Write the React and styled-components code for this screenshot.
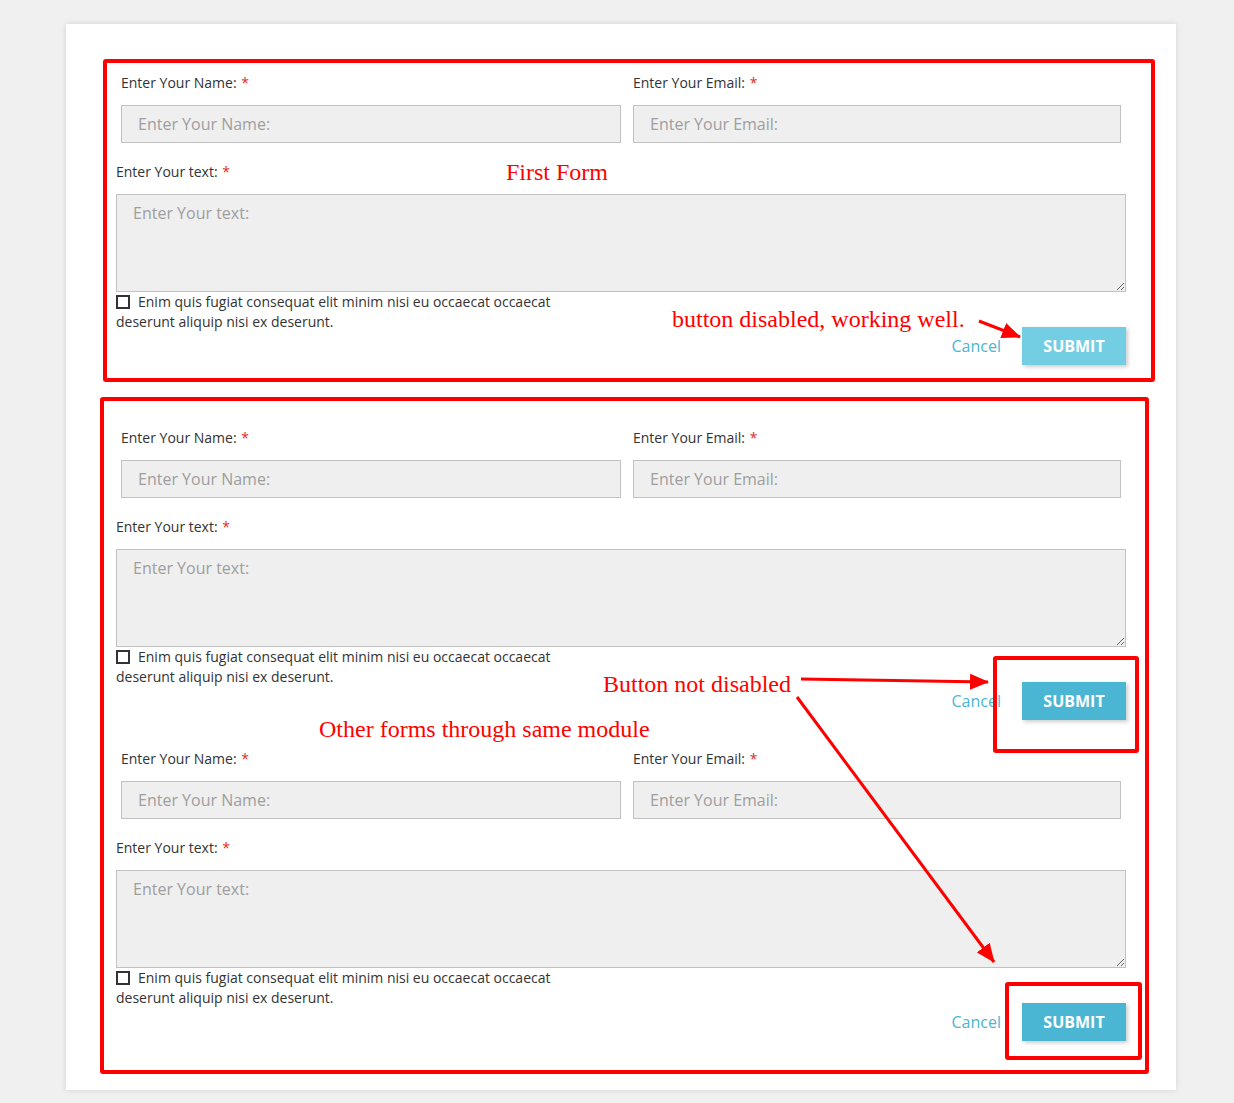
import React from "react";
import styled, { createGlobalStyle } from "styled-components";

const GlobalStyle = createGlobalStyle`
  html, body { margin: 0; padding: 0; }
  body {
    background: #f0f0f0;
    font-family: "Open Sans", "Noto Sans", sans-serif;
    color: #333;
  }
  * { box-sizing: border-box; }
`;

const Page = styled.div`
  position: relative;
  width: 1234px;
  height: 1103px;
  padding-top: 24px;
  overflow: hidden;
`;

const Card = styled.div`
  width: 1110px;
  margin-left: 66px;
  background: #fff;
  padding: 49px 50px 49px 50px;
  box-shadow: 0 0 6px rgba(0, 0, 0, 0.12);
`;

const FormBlock = styled.form`
  width: 1010px;
  margin-bottom: ${(p) => p.$after || 0}px;
`;

const TopRow = styled.div`
  display: grid;
  grid-template-columns: 505px 505px;
`;

const Col = styled.div`
  padding: ${(p) => (p.$right ? "0 5px 0 12px" : "0 0 0 5px")};
`;

const Label = styled.label`
  display: block;
  font-size: 14px;
  line-height: 20px;
  color: #333;
  margin-top: ${(p) => p.$top || 0}px;
  margin-bottom: 12px;
`;

const Star = styled.span`
  color: #e02b27;
  margin-left: 1px;
`;

const Input = styled.input`
  display: block;
  width: 100%;
  height: 38px;
  margin: 0;
  padding: 0 16px;
  border: 1px solid #c2c2c2;
  background: #efefef;
  font-family: "Open Sans", "Noto Sans", sans-serif;
  font-size: 16px;
  color: #333;
  outline: none;
  &::placeholder { color: #9e9e9e; }
`;

const TextArea = styled.textarea`
  display: block;
  width: 100%;
  height: 98px;
  margin: 0;
  padding: 7px 16px;
  border: 1px solid #c2c2c2;
  background: #efefef;
  font-family: "Open Sans", "Noto Sans", sans-serif;
  font-size: 16px;
  line-height: 22px;
  color: #333;
  resize: vertical;
  outline: none;
  &::placeholder { color: #9e9e9e; }
`;

const BottomRow = styled.div`
  display: flex;
  justify-content: space-between;
  align-items: flex-start;
`;

const CheckLabel = styled.label`
  width: 455px;
  font-size: 14px;
  line-height: 20px;
  color: #333;
`;

const CheckBox = styled.span`
  display: inline-block;
  width: 14px;
  height: 14px;
  border: 2px solid #333;
  margin-right: 8px;
  vertical-align: -2px;
`;

const Actions = styled.div`
  display: flex;
  align-items: center;
  gap: 21px;
  padding-top: 35px;
`;

const Cancel = styled.a`
  font-size: 16px;
  color: #4ab6d3;
  text-decoration: none;
`;

const Submit = styled.button`
  width: 104px;
  height: 38px;
  border: none;
  padding: 0;
  background: ${(p) => (p.disabled ? "#73cee3" : "#4ab6d3")};
  color: #fff;
  font-family: "Open Sans", "Noto Sans", sans-serif;
  font-weight: 700;
  font-size: 16px;
  letter-spacing: 0;
  box-shadow: 2px 2px 4px rgba(0, 0, 0, 0.2);
  cursor: pointer;
`;

const Overlay = styled.div`
  position: absolute;
  inset: 0;
  pointer-events: none;
`;

const Marks = styled.svg`
  position: absolute;
  left: 0;
  top: 0;
`;

const Note = styled.span`
  position: absolute;
  font-family: "Liberation Serif", "Times New Roman", serif;
  font-size: 24px;
  line-height: 24px;
  color: #ff0000;
  white-space: nowrap;
`;

function ContactForm({ after, disabled }) {
  return (
    <FormBlock $after={after} onSubmit={(e) => e.preventDefault()}>
      <TopRow>
        <Col>
          <Label>
            Enter Your Name: <Star>*</Star>
          </Label>
          <Input placeholder="Enter Your Name:" />
        </Col>
        <Col $right>
          <Label>
            Enter Your Email: <Star>*</Star>
          </Label>
          <Input placeholder="Enter Your Email:" />
        </Col>
      </TopRow>
      <Label $top={19}>
        Enter Your text: <Star>*</Star>
      </Label>
      <TextArea placeholder="Enter Your text:" />
      <BottomRow>
        <CheckLabel>
          <CheckBox />
          Enim quis fugiat consequat elit minim nisi eu occaecat occaecat deserunt aliquip nisi ex deserunt.
        </CheckLabel>
        <Actions>
          <Cancel href="#">Cancel</Cancel>
          <Submit type="submit" disabled={disabled}>
            SUBMIT
          </Submit>
        </Actions>
      </BottomRow>
    </FormBlock>
  );
}

export default function App() {
  return (
    <>
      <GlobalStyle />
      <Page>
        <Card>
          <ContactForm after={63} disabled />
          <ContactForm after={29} />
          <ContactForm />
        </Card>
        <Overlay>
          <Marks width="1234" height="1103" viewBox="0 0 1234 1103">
            <defs>
              <marker
                id="head"
                markerUnits="userSpaceOnUse"
                markerWidth="20"
                markerHeight="16"
                refX="18"
                refY="8"
                orient="auto"
              >
                <path d="M0 0 L19 8 L0 16 Z" fill="#ff0000" />
              </marker>
            </defs>
            <g fill="none" stroke="#ff0000" strokeWidth="4" strokeLinejoin="round">
              <rect x="105" y="61" width="1048" height="319" rx="1" />
              <rect x="102" y="399" width="1045" height="673" rx="1" />
              <rect x="995" y="658" width="142" height="93" rx="1" />
              <rect x="1007" y="984" width="133" height="74" rx="1" />
            </g>
            <g stroke="#ff0000" strokeWidth="3" fill="none">
              <line x1="979" y1="321" x2="1020" y2="337" markerEnd="url(#head)" />
              <line x1="801" y1="679" x2="988" y2="682" markerEnd="url(#head)" />
              <line x1="797" y1="697" x2="994" y2="962" markerEnd="url(#head)" />
            </g>
          </Marks>
          <Note style={{ left: 506, top: 160 }}>First Form</Note>
          <Note style={{ left: 672, top: 307 }}>button disabled, working well.</Note>
          <Note style={{ left: 603, top: 672 }}>Button not disabled</Note>
          <Note style={{ left: 319, top: 717 }}>Other forms through same module</Note>
        </Overlay>
      </Page>
    </>
  );
}
